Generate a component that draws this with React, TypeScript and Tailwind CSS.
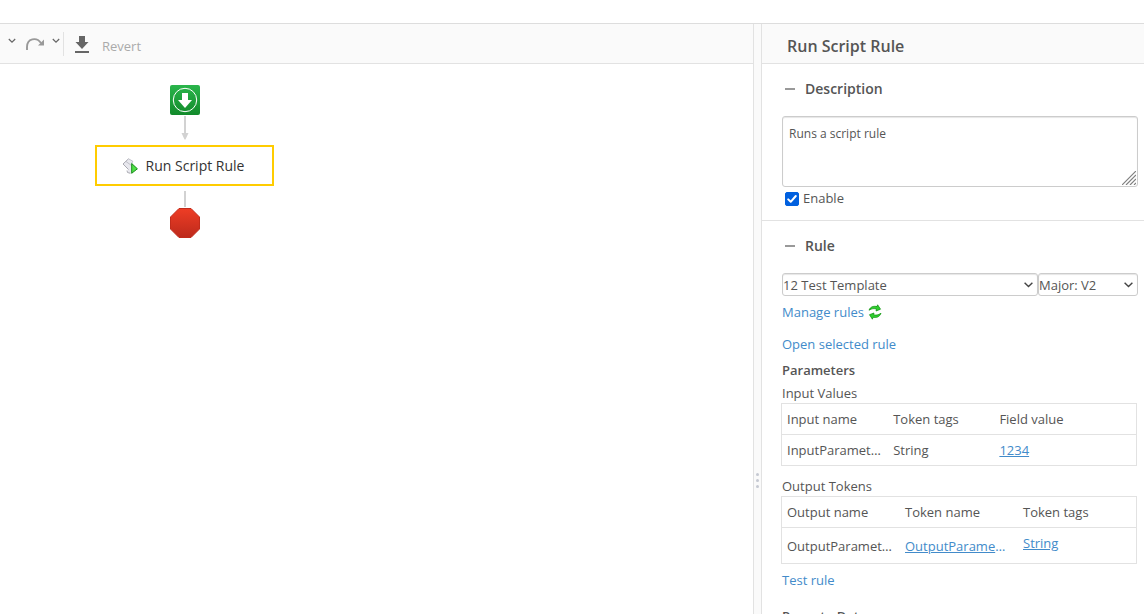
import type { ReactNode } from "react";

function SectionTitle({ children }: { children: ReactNode }) {
  return (
    <h3 className="text-sm leading-5 font-semibold text-[#555]">
      <button type="button" aria-expanded="true" className="flex items-center gap-[10px] pl-[3px]">
        <span aria-hidden="true" className="h-[2px] w-[10px] bg-[#999]" />
        {children}
      </button>
    </h3>
  );
}

function Chevron() {
  return (
    <svg width="8" height="6" viewBox="0 0 8 6" fill="none" stroke="#666" strokeWidth="1.2" aria-hidden="true">
      <path d="M0.8 1 L4 4.2 L7.2 1" />
    </svg>
  );
}

function SelectArrow() {
  return (
    <svg className="pointer-events-none absolute right-[5px] top-[9px]" width="9" height="6" viewBox="0 0 9 6" fill="none" stroke="#444" strokeWidth="1.4" aria-hidden="true">
      <path d="M0.6 0.7 L4.5 4.6 L8.4 0.7" />
    </svg>
  );
}

function Toolbar() {
  return (
    <div className="flex h-10 items-center border-b border-[#e2e2e2] bg-[#fafafa] pl-2" role="toolbar">
      <button type="button" aria-label="Undo history" className="mb-[5px]"><Chevron /></button>
      <button type="button" aria-label="Redo" className="mt-px ml-[10px]">
        <svg width="18" height="12" viewBox="0 0 18 12" aria-hidden="true">
          <path d="M1 12 V9 C1 0.5 10.5 -1.5 15 5" fill="none" stroke="#999" strokeWidth="1.9" />
          <path d="M18 1.5 V7.5 H12 Z" fill="#999" />
        </svg>
      </button>
      <button type="button" aria-label="Redo history" className="mb-[5px] ml-2"><Chevron /></button>
      <span className="ml-[3px] h-6 w-px bg-[#e2e2e2]" />
      <button type="button" aria-label="Save" className="mt-[2px] ml-[11px]">
        <svg width="14" height="17" viewBox="0 0 14 17" fill="#666" aria-hidden="true">
          <path d="M4 0 H10 V6 H13.5 L7 13 L0.5 6 H4 Z" />
          <path d="M0 15 H14 V17 H0 Z" />
        </svg>
      </button>
      <button type="button" disabled className="mt-1 ml-[13px] text-[13px] leading-5 text-[#aaa]">Revert</button>
    </div>
  );
}

function Workflow() {
  return (
    <div className="flex w-[369px] flex-col items-center pt-[21px]">
      <svg width="30" height="30" viewBox="0 0 30 30" role="img" aria-label="Start">
        <defs>
          <linearGradient id="start" x1="0" y1="0" x2="0" y2="1">
            <stop offset="0" stopColor="#2ab54b" />
            <stop offset="1" stopColor="#128a2b" />
          </linearGradient>
        </defs>
        <rect width="30" height="30" rx="2" fill="url(#start)" />
        <circle cx="15" cy="15" r="11.7" fill="none" stroke="#fff" strokeWidth="1" />
        <path d="M12 8 H18 V15 H22 L15 23 L8 15 H12 Z" fill="#fff" />
      </svg>
      <svg className="mt-px" width="8" height="24" viewBox="0 0 8 24" fill="#d2d2d2" aria-hidden="true">
        <path d="M3 0 H5 V17 H7.5 L4.5 23.5 H3.5 L0.5 17 H3 Z" />
      </svg>
      <button type="button" className="mt-[5px] flex h-[41px] w-[179px] items-center justify-center gap-2 border-2 border-[#fc0] bg-white pr-[3px] text-sm text-[#333]">
        <svg width="16" height="16" viewBox="0 0 16 16" aria-hidden="true">
          <path d="M1 6 L6.5 0.8 L10.5 3.5 L9 8 L10 14 L7.5 15.5 L5.5 13.5 L6 11.5 Z" fill="#e8e8ee" />
          <path d="M6.5 0.8 L10.8 3.2 L9.5 6 M4 3.5 L9.5 7.5" fill="none" stroke="#b4b4bd" strokeWidth="0.8" />
          <path d="M6.5 0.8 L1 6 L6.5 11.5 M5 12.5 L5.5 14.5 L8.5 15.3" fill="none" stroke="#a2a2aa" strokeWidth="0.9" />
          <path d="M9.7 5.5 L15.4 10.8 L9.7 15.3 Z" fill="#4fe045" stroke="#168c19" />
        </svg>
        Run Script Rule
      </button>
      <span className="mt-[5px] h-4 w-[2px] bg-[#d2d2d2]" />
      <svg className="mt-px" width="30" height="30" viewBox="0 0 30 30" role="img" aria-label="Stop">
        <defs>
          <linearGradient id="stop" x1="0" y1="0" x2="0" y2="1">
            <stop offset="0" stopColor="#ee3d25" />
            <stop offset="1" stopColor="#bd2a1c" />
          </linearGradient>
        </defs>
        <path d="M9 0.5 H21 L29.5 9 V21 L21 29.5 H9 L0.5 21 V9 Z" fill="url(#stop)" stroke="#c22b1b" />
      </svg>
    </div>
  );
}

const link = "text-[#428bca]";
const uline = "text-[#428bca] underline";
const table = "-ml-px w-full table-fixed border-separate border-spacing-0 border border-[#e2e2e2]";
const cell = "truncate pl-[5px] pr-[6px] text-left font-normal";
const head = "h-[31px] border-b border-[#e2e2e2] " + cell;

export default function App() {
  return (
    <div className="flex h-screen flex-col overflow-hidden bg-white pt-[23px] font-['Open_Sans',sans-serif] text-[13px] leading-5 text-[#555]">
      <div className="flex min-h-0 flex-1 border-t border-[#ddd]">
        <main className="min-w-0 flex-1">
          <Toolbar />
          <Workflow />
        </main>
        <div role="separator" aria-orientation="vertical" className="flex w-[9px] shrink-0 flex-col items-center gap-[3px] border-x border-[#e2e2e2] bg-[#fafafa] pt-[449px]">
          <span className="size-[3px] rounded-full bg-[#c5c9d2]" />
          <span className="size-[3px] rounded-full bg-[#c5c9d2]" />
          <span className="size-[3px] rounded-full bg-[#c5c9d2]" />
        </div>
        <aside className="w-[382px] shrink-0">
          <header className="flex h-10 items-center border-b border-[#e2e2e2] bg-[#fafafa] pt-1 pl-[25px]">
            <h2 className="text-base leading-6 font-semibold text-[#555]">Run Script Rule</h2>
          </header>
          <section className="border-b border-[#e2e2e2] pt-[15px] pr-[6px] pb-3 pl-5">
            <SectionTitle>Description</SectionTitle>
            <div className="relative mt-[17px]">
              <textarea aria-label="Description" defaultValue="Runs a script rule" className="block h-[71px] w-full resize-none rounded-[3px] border border-[#ccc] px-[6px] py-[7px] text-xs leading-5 shadow-[inset_0_1px_1px_rgba(0,0,0,0.1)]" />
              <svg className="pointer-events-none absolute right-[2px] bottom-[2px]" width="14" height="14" viewBox="0 0 14 14" stroke="#808080" strokeWidth="1.2" aria-hidden="true">
                <path d="M0 14 L14 0 M4 14 L14 4 M8 14 L14 8 M12 14 L14 12" />
              </svg>
            </div>
            <label className="mt-px flex items-center gap-1 pl-[3px]">
              <span className="relative mt-px size-[14px]">
                <input type="checkbox" defaultChecked className="peer block size-[14px] appearance-none rounded-[2px] border border-[#777] checked:border-[#0060df] checked:bg-[#0060df]" />
                <svg className="pointer-events-none absolute inset-0 hidden peer-checked:block" width="14" height="14" viewBox="0 0 14 14" fill="none" stroke="#fff" strokeWidth="2" strokeLinecap="round" strokeLinejoin="round" aria-hidden="true">
                  <path d="M3.2 7.4 L5.7 9.8 L10.8 4" />
                </svg>
              </span>
              Enable
            </label>
          </section>
          <section className="pt-[15px] pr-[6px] pl-5">
            <SectionTitle>Rule</SectionTitle>
            <div className="mt-[17px] flex">
              <div className="relative min-w-0 flex-1">
                <select aria-label="Rule" className="block h-[23px] w-full appearance-none rounded-[3px] border border-[#ccc] bg-white shadow-[inset_0_1px_1px_rgba(0,0,0,0.1)]">
                  <option>12 Test Template</option>
                </select>
                <SelectArrow />
              </div>
              <div className="relative w-[100px]">
                <select aria-label="Version" className="block h-[23px] w-full appearance-none rounded-[3px] border border-[#ccc] bg-white shadow-[inset_0_1px_1px_rgba(0,0,0,0.1)]">
                  <option>Major: V2</option>
                </select>
                <SelectArrow />
              </div>
            </div>
            <div className="mt-[6px] flex items-center gap-1">
              <a href="#manage" className={link}>Manage rules</a>
              <button type="button" aria-label="Refresh rules">
                <svg width="14" height="16" viewBox="0 0 14 16" fill="#2fd02f" stroke="#119611" strokeWidth="0.8" aria-hidden="true">
                  <path d="M1 6.2 C2.5 2.6 5.5 1.8 9 2.6 L9.6 0.8 L12.5 5.2 L8 7 L8.6 5.2 C6 4.2 4 4.4 1 6.2 Z" />
                  <path d="M13 9.3 C11.5 13 8.5 14 5 13.2 L4.4 15.2 L1.5 10.7 L6 9 L5.4 10.7 C8 11.5 10 11.2 13 9.3 Z" />
                </svg>
              </button>
            </div>
            <a href="#open" className={"mt-3 block w-fit " + link}>Open selected rule</a>
            <h4 className="mt-[6px] font-semibold">Parameters</h4>
            <p className="mt-[3px]">Input Values</p>
            <table aria-label="Input Values" className={table}>
              <colgroup><col className="w-[30%]" /><col className="w-[30%]" /><col /></colgroup>
              <thead>
                <tr>
                  <th className={head}>Input name</th><th className={head}>Token tags</th><th className={head}>Field value</th>
                </tr>
              </thead>
              <tbody>
                <tr className="h-[30px]">
                  <td className={cell}>InputParameter</td><td className={cell}>String</td>
                  <td className={cell}><a href="#value" className={uline}>1234</a></td>
                </tr>
              </tbody>
            </table>
            <p className="mt-[10px]">Output Tokens</p>
            <table aria-label="Output Tokens" className={table}>
              <thead>
                <tr>
                  <th className={head}>Output name</th><th className={head}>Token name</th><th className={head}>Token tags</th>
                </tr>
              </thead>
              <tbody>
                <tr className="h-[35px]">
                  <td className={cell}>OutputParameter</td>
                  <td className="truncate pr-3 pl-[5px] text-[#428bca]"><a href="#token" className={uline}>OutputParameter</a></td>
                  <td className={cell + " pb-[5px]"}><a href="#tags" className={uline}>String</a></td>
                </tr>
              </tbody>
            </table>
            <a href="#test" className={"mt-[6px] block w-fit " + link}>Test rule</a>
            <h4 className="mt-4 font-semibold">Parse to Date</h4>
          </section>
        </aside>
      </div>
    </div>
  );
}
